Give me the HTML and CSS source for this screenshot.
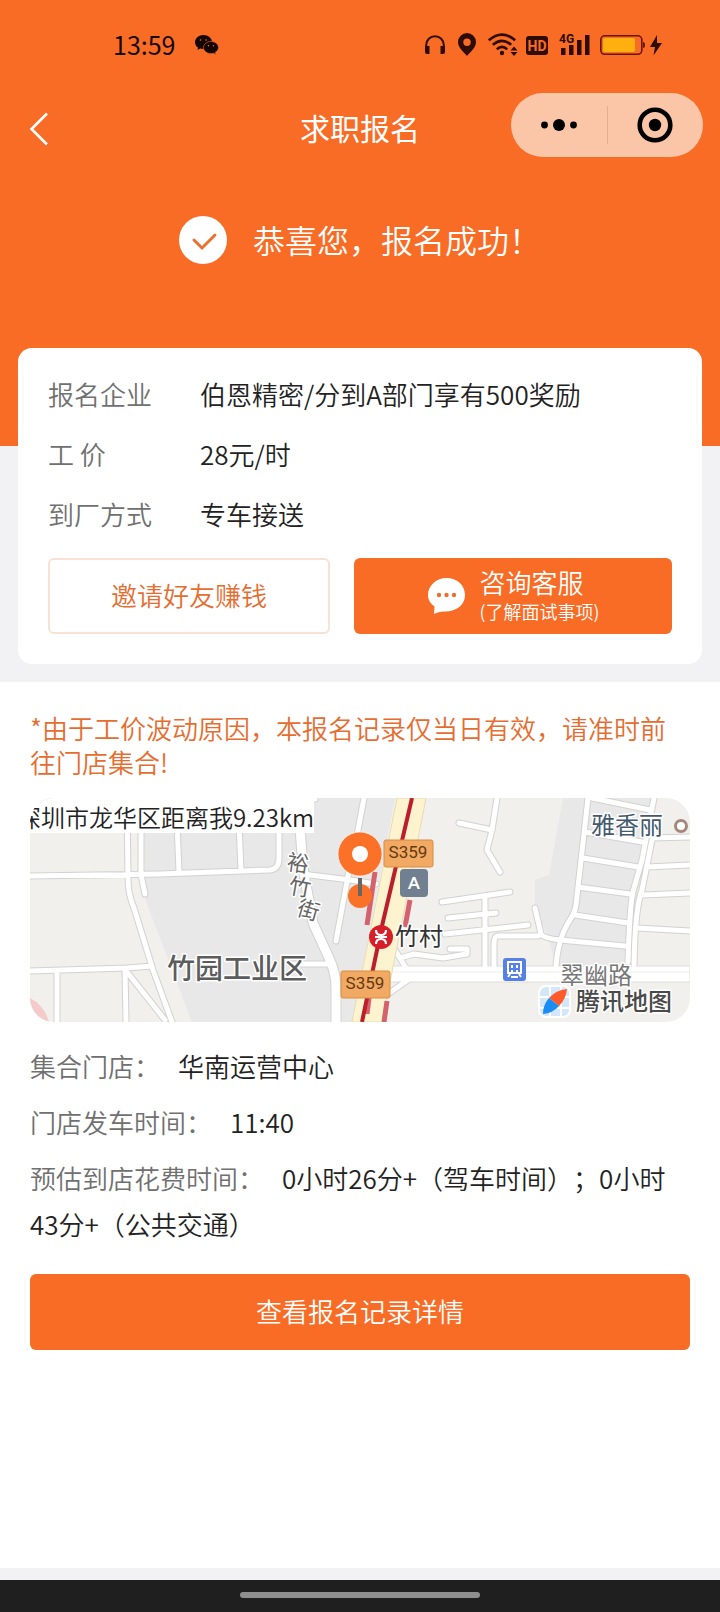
FILE: index.html
```
<!DOCTYPE html>
<html lang="zh-CN">
<head>
  <meta charset="UTF-8">
  <meta name="viewport" content="width=device-width, initial-scale=1.0">
  <title>求职报名</title>
  <link rel="stylesheet" href="styles.css">
</head>
<body>
  <header class="hero">
    <div class="status-bar">
      <span class="status-time">13:59</span>
      <svg class="wechat" width="24" height="20" viewBox="0 0 24 20">
        <path d="M8.500 0C3.800 0 0 3.200 0 7.200c0 2.200 1.200 4.200 3.100 5.500L2.400 15l2.800-1.400c1 .3 2.100.5 3.300.5 4.700 0 8.500-3.100 8.500-7S13.200 0 8.500 0z" fill="#150600"/>
        <path d="M16 6.500c-4.200 0-7.500 2.700-7.500 6.100s3.300 6.100 7.500 6.100c.9 0 1.800-.1 2.600-.4L21 19.500l-.6-2.200c1.900-1.100 3.100-2.800 3.100-4.700 0-3.400-3.300-6.100-7.500-6.100z" fill="#150600" stroke="#f96c26" stroke-width=".6"/>
        <g fill="#f96c26"><circle cx="5.500" cy="5" r=".8"/><circle cx="11" cy="5" r=".8"/><circle cx="13.500" cy="10.800" r=".7"/><circle cx="18.500" cy="10.800" r=".7"/></g>
      </svg>

      <div class="status-icons">
        <svg width="25" height="24" viewBox="0 0 25 24" fill="#2e0c00">
          <path d="M1.200 16v-4a8.800 8.800 0 0 1 17.600 0v4" fill="none" stroke="#2e0c00" stroke-width="2"/>
          <path d="M0 13h4.500v8H2a2 2 0 0 1-2-2zM15.500 13H20v6a2 2 0 0 1-2 2h-2.500z"/>
        </svg>
        <svg width="22" height="24" viewBox="0 0 22 24">
          <path d="M9 0a9 9 0 0 0-9 9c0 6 6 10 9 14 3-4 9-8 9-14a9 9 0 0 0-9-9zm0 5.500a3.700 3.700 0 1 1 0 7.400 3.700 3.700 0 0 1 0-7.400z" fill="#2e0c00"/>
        </svg>
        <svg width="30" height="24" viewBox="0 0 30 24">
          <g fill="none" stroke="#2e0c00" stroke-width="2.600">
            <path d="M.8 7.300q13-11.500 26.400 0"/><path d="M4.800 11.800q9.200-8 18.400 0"/><path d="M8.800 16.200q5.200-4.600 10.400 0"/>
          </g>
          <circle cx="14" cy="20" r="2.200" fill="#2e0c00"/>
          <path d="M22.500 17.500h7L26 13.500zM22.500 19h7L26 23z" fill="#2e0c00"/>
        </svg>
        <svg width="25" height="24" viewBox="0 0 25 24">
          <rect y="3" width="22" height="19" rx="3" fill="#2e0c00"/>
          <text x="11" y="18" text-anchor="middle" class="hd-text">HD</text>
        </svg>
        <svg width="33" height="24" viewBox="0 0 33 24" fill="#2e0c00">
          <text x="0" y="10" class="net-text">4G</text>
          <path d="M2 15h4.500v7H2zM10 12h4.500v10H10zM18 7h4.500v15H18zM26 2h4.500v20H26z"/>
        </svg>
        <svg width="62" height="24" viewBox="0 0 62 24">
          <rect x=".8" y="2.800" width="41" height="18.500" rx="4" fill="none" stroke="#6a1500" stroke-width="1.600"/>
          <rect x="3" y="5" width="32" height="14" rx="2" fill="#ffb00f"/>
          <path d="M43 9q2 0 2 3t-2 3z" fill="#6a1500"/>
          <path d="M57 2l-7 12h5l-1.500 8.500L62 10h-5z" fill="#2e0c00"/>
        </svg>
      </div>
    </div>

    <nav class="nav-bar">
      <button class="back-button" aria-label="返回">
        <svg width="20" height="34" viewBox="0 0 20 34">
          <path d="M18 1.500L2.500 17 18 32.500" fill="none" stroke="#fff" stroke-width="2.600"/>
        </svg>
      </button>
      <h1 class="nav-title">求职报名</h1>
      <div class="capsule">
        <button class="capsule-button" aria-label="更多">
          <svg width="36" height="36" viewBox="0 0 36 36"><circle cx="3.500" cy="18" r="3.400"/><circle cx="18" cy="18" r="6"/><circle cx="32.500" cy="18" r="3.400"/></svg>
        </button>
        <button class="capsule-button" aria-label="关闭">
          <svg width="36" height="36" viewBox="0 0 36 36"><circle cx="18" cy="18" r="15.300" fill="none" stroke="#000" stroke-width="4.600"/><circle cx="18" cy="18" r="6.200"/></svg>
        </button>
      </div>
    </nav>

    <div class="success">
      <svg width="48" height="48" viewBox="0 0 48 48">
        <circle cx="24" cy="24" r="24" fill="#fff"/>
        <path d="M15 24l8 8 13-13" fill="none" stroke="#e9702f" stroke-width="3" stroke-linecap="round"/>
      </svg>
      <p class="success-text">恭喜您，报名成功！</p>
    </div>
  </header>

  <section class="card">
    <dl class="detail-list">
      <dt>报名企业</dt><dd>伯恩精密/分到A部门享有500奖励</dd>
      <dt>工 价</dt><dd>28元/时</dd>
      <dt>到厂方式</dt><dd>专车接送</dd>
    </dl>
    <div class="card-buttons">
      <button class="invite-button">邀请好友赚钱</button>
      <button class="service-button">
        <svg width="38" height="38" viewBox="0 0 38 38">
          <path d="M19.500 1C9.500 1 1 8.500 1 18c0 5 2.500 8.500 6.500 11.500L7 37c3-1.800 6-2.300 10-2.500C29 35 38 28 38 18S30 1 19.500 1z" fill="#fff"/>
          <g fill="#e9702f"><circle cx="12" cy="18" r="2.200"/><circle cx="19.500" cy="18" r="2.200"/><circle cx="27" cy="18" r="2.200"/></g>
        </svg>
        <span class="service-text">咨询客服<small>(了解面试事项)</small></span>
      </button>
    </div>
  </section>

  <main class="store">
    <p class="notice">*由于工价波动原因，本报名记录仅当日有效，请准时前往门店集合!</p>

    <div class="map">
      <svg class="map-picture" viewBox="0 0 660 224" preserveAspectRatio="xMidYMid slice">
        <defs>
          <path id="minor" d="M0 1H285M0 78L130 76L240 72Q249 71 249 60V0M97 0L98 80Q98 96 104 110L123 172L142 224M111 0V77L115 96M146 0L149 74M208 0L211 73M0 173L97 170L122 168M27 174V224M95 171L96 224M97 174L135 222
            M272 76L320 82L346 86M262 166H300M334 0L328 32L318 78L306 143
            M365 152L376 170M358 196L378 182M370 160L384 156L413 160L437 156V151H420M429 25L462 32M467 0L462 32L457 52L470 74M412 104L480 94M418 120L466 115M415 136L498 127M455 99V168M508 138H468Q464 138 464 146V167
            M505 110L511 136Q513 140 530 142L595 148M558 0L546 107Q545 115 538 125Q528 142 526 167M562 0L620 12M624 0L612 62L604 90Q600 100 598 164M622 42L612 92Q605 110 604 167M622 40L660 39
            M555 34L612 44M553 60L608 69M548 89L600 96M545 117L598 125M617 69L660 67M613 97L660 95M607 130L660 133"/>
          <path id="street" d="M270 30L273 70L283 125L299 160Q306 175 306 190V224"/>
        </defs>
        <rect width="660" height="224" fill="#f1f0ed"/>
        <path d="M113 0H365L322 224H162L115 101z" fill="#e8e8e8"/>
        <path d="M533 0H623L598 167H526L518 140L505 110V82L519 77z" fill="#e8e8e8"/>
        <path d="M0 200Q14 207 19 224H0z" fill="#f4cbc8"/>

        <use href="#minor" class="casing"/>
        <use href="#street" class="casing wide"/>
        <path d="M358 168H660V184H358z" fill="#fff" stroke="#dcdcda"/>
        <use href="#minor" class="road"/>
        <use href="#street" class="road wide"/>
        <path d="M360 174H660" stroke="#ececea"/>

        <path d="M367 0H396L365 159L352 224H322z" fill="#fdf4cf" stroke="#e6dcb4"/>
        <path d="M345 74L337 127M380 102L375 129M357 203L354 224M339 200L337 216" stroke="#d4616b" stroke-width="5" fill="none"/>
        <path d="M382 0L352 128L332 224" stroke="#bd1e2c" stroke-width="4" fill="none"/>

        <g class="shield">
          <rect x="354" y="42" width="49" height="27" rx="2"/><text x="378" y="60">S359</text>
          <rect x="311" y="173" width="49" height="27" rx="2"/><text x="335" y="191">S359</text>
        </g>
        <rect x="370" y="71" width="28" height="28" rx="4" fill="#708090"/>
        <text x="384" y="91" class="exit-label">A</text>

        <!-- metro stop -->
        <circle cx="351" cy="139" r="12" fill="#d71f2b"/>
        <path d="M346 132q0 5 5 5t5-5M346 146q0-5 5-5t5 5M351 136v6M345 139h12" fill="none" stroke="#fff" stroke-width="2.200"/>
        <!-- bus stop -->
        <rect x="473" y="160" width="23" height="23" rx="3" fill="#5680e6"/>
        <path d="M478 164h13v11h-13zM478 179l2-3M491 179l-2-3" fill="none" stroke="#fff" stroke-width="2"/>
        <path d="M481 167h2v3h-2zM486 167h2v3h-2zM481 172h2v2h-2zM486 172h2v2h-2zM481 178h7v2h-7z" fill="#fff"/>
        <circle cx="651" cy="28" r="5.500" fill="#fff" stroke="#a5877b" stroke-width="3"/>

        <g class="street-label">
          <text x="268" y="73" transform="rotate(8 268 66)">裕</text>
          <text x="270" y="97" transform="rotate(10 270 89)">竹</text>
          <text x="278" y="120" transform="rotate(16 278 114)">街</text>
        </g>
        <text x="137" y="181" class="area-label">竹园工业区</text>
        <text x="365" y="147" class="place-label metro">竹村</text>
        <text x="561" y="36" class="place-label shop">雅香丽</text>
        <text x="530" y="186" class="place-label way">翠幽路</text>

        <!-- destination pin -->
        <circle cx="330" cy="98" r="12" fill="#fb7127"/>
        <path d="M330 80V98" stroke="#666" stroke-width="4"/>
        <circle cx="330" cy="56" r="22" fill="#fb7127" stroke="#fff" stroke-opacity=".6"/>
        <circle cx="330" cy="56" r="8" fill="#fff"/>

        <!-- map provider -->
        <rect x="508" y="187" width="33" height="33" rx="8" fill="#fff"/>
        <rect x="510" y="189" width="29" height="29" rx="6" fill="#d3e6fa"/>
        <path d="M510 199H539M510 210H539M520 189V218M531 189V218" stroke="#fff" stroke-width="2"/>
        <path d="M537 191Q526 192 519 200L529 208Q536 201 537 191z" fill="#ff5a2a"/>
        <path d="M513 216Q513 207 519 200L529 208Q523 215 513 216z" fill="#1b8df2"/>
        <text x="546" y="212" class="provider">腾讯地图</text>
      </svg>
      <div class="distance"><span>深圳市龙华区距离我9.23km</span></div>
    </div>

    <p class="info"><span class="info-label">集合门店：</span>华南运营中心</p>
    <p class="info"><span class="info-label">门店发车时间：</span>11:40</p>
    <p class="info"><span class="info-label">预估到店花费时间：</span>0小时26分+（驾车时间）；0小时43分+（公共交通）</p>

    <button class="record-button">查看报名记录详情</button>
  </main>

  <footer class="home-bar"><div class="home-handle"></div></footer>
</body>
</html>
```
FILE: styles.css
```
* {
  box-sizing: border-box;
}

body {
  margin: 0;
  min-height: 100vh;
  display: flex;
  flex-direction: column;
  background-color: #f2f2f5;
  font-family: "Noto Sans CJK SC", sans-serif;
  font-size: 26px;
  font-weight: 350;
  text-spacing-trim: space-all;
  color: #222;
}

p, h1, dl, dd {
  margin: 0;
}

button {
  padding: 0;
  border: none;
  font-family: inherit;
  font-size: 26px;
  font-weight: inherit;
  cursor: pointer;
}

svg {
  display: block;
  flex-shrink: 0;
}

.hero {
  background-color: #f96c26;
  color: white;
  padding-bottom: 182px;
}

.status-bar {
  height: 90px;
  padding: 0 58px 0 113px;
  display: flex;
  align-items: center;
}

.status-time {
  padding-bottom: 2px;
  color: #150600;
  font-size: 25px;
  font-weight: 400;
}

.wechat {
  margin-left: 20px;
}

.status-icons {
  margin-left: auto;
  display: flex;
  gap: 8px;
}

.hd-text {
  font: bold 14px Roboto, sans-serif;
  fill: #f96c26;
}

.net-text {
  font: bold 12px Roboto, sans-serif;
}

.nav-bar {
  height: 78px;
  padding: 0 17px 0 29px;
  display: grid;
  grid-template-columns: 1fr auto 1fr;
  align-items: center;
}

.back-button {
  justify-self: start;
  background: transparent;
}

/* keeps the title on the window's centre despite the unequal side padding */
.nav-title {
  margin-right: 12px;
  padding-bottom: 4px;
  font-size: 30px;
  font-weight: 400;
}

.capsule {
  justify-self: end;
  width: 192px;
  height: 64px;
  margin-bottom: 8px;
  border-radius: 32px;
  background-color: #fbc5a8;
  display: flex;
  align-items: center;
}

.capsule-button {
  flex: 1;
  height: 38px;
  display: flex;
  align-items: center;
  justify-content: center;
  background: transparent;
}

.capsule-button + .capsule-button {
  border-left: 1px solid #e8ac8e;
}

.success {
  margin-top: 48px;
  height: 48px;
  display: flex;
  align-items: center;
  justify-content: center;
  gap: 26px;
}

.success-text {
  padding-bottom: 2px;
  font-size: 32px;
}

.card {
  margin: -98px 18px 18px;
  padding: 16px 30px 30px;
  border-radius: 14px;
  background-color: white;
}

.detail-list {
  display: grid;
  grid-template-columns: 152px 1fr;
  line-height: 60px;
  margin-bottom: 14px;
}

.detail-list dt {
  color: #707070;
}

.card-buttons {
  display: grid;
  grid-template-columns: 47fr 53fr;
  gap: 24px;
}

.invite-button,
.service-button,
.record-button {
  height: 76px;
  border-radius: 6px;
}

.invite-button,
.record-button {
  padding-bottom: 4px;
}

.invite-button {
  border: 2px solid #fae1d6;
  background-color: white;
  color: #e66d30;
}

.service-button {
  display: flex;
  align-items: center;
  justify-content: center;
  gap: 15px;
  background-color: #f96c26;
  color: white;
}

.service-text {
  display: flex;
  flex-direction: column;
  padding-bottom: 2px;
  text-align: left;
  line-height: 32px;
}

.service-text small {
  font-size: 18px;
  line-height: 26px;
}

.store {
  flex: 1;
  margin-bottom: 12px;
  padding: 29px 30px;
  background-color: white;
}

.notice {
  line-height: 34px;
  color: #e66d30;
  margin-bottom: 19px;
}

.map {
  position: relative;
  height: 224px;
  margin-bottom: 21px;
  border-radius: 24px;
  overflow: hidden;
}

.map-picture {
  width: 100%;
  height: 100%;
}

.casing,
.road {
  fill: none;
  stroke-linecap: round;
  stroke-linejoin: round;
}

.casing {
  stroke: #d2d2d0;
  stroke-width: 7px;
}

.road {
  stroke: #fff;
  stroke-width: 5px;
}

.casing.wide {
  stroke-width: 11px;
}

.road.wide {
  stroke-width: 9px;
}

.shield rect {
  fill: #f1a963;
  stroke: #d98c45;
}

.shield text {
  font: 17px Roboto, sans-serif;
  fill: #633a10;
  text-anchor: middle;
}

.exit-label {
  font: bold 17px Lato, sans-serif;
  fill: #fff;
  text-anchor: middle;
}

.street-label,
.area-label,
.place-label,
.provider {
  stroke: #fff;
  stroke-width: 3px;
  stroke-linejoin: round;
  paint-order: stroke;
}

.street-label {
  font-size: 22px;
  font-weight: 400;
  fill: #666;
  text-anchor: middle;
}

.area-label {
  font-size: 28px;
  font-weight: 500;
  fill: #5c5c5c;
}

.place-label {
  font-size: 24px;
  font-weight: 400;
}

.metro {
  fill: #333;
}

.shop {
  fill: #43596e;
}

.way {
  fill: #777;
}

.provider {
  font-size: 24px;
  font-weight: 500;
  fill: #4a4a4a;
}

.distance {
  position: absolute;
  top: 3px;
  left: 0;
  width: 284px;
  overflow: hidden;
  display: flex;
  justify-content: flex-end;
  background-color: white;
  font-size: 24px;
  line-height: 32px;
  white-space: nowrap;
}

.info {
  line-height: 46px;
  margin-bottom: 10px;
}

.info-label {
  color: #707070;
  margin-right: 18px;
}

.record-button {
  display: block;
  width: 100%;
  margin-top: 27px;
  background-color: #f96c26;
  color: white;
}

.home-bar {
  height: 32px;
  padding-top: 12px;
  background-color: #1f1f1f;
}

.home-handle {
  width: 240px;
  height: 6px;
  margin: 0 auto;
  border-radius: 3px;
  background-color: #8e8e8e;
}
```
